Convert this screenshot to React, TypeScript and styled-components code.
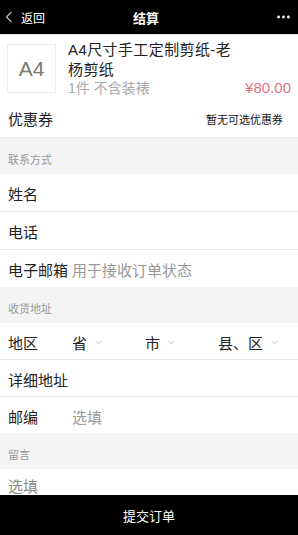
import React from 'react'
import styled, { createGlobalStyle } from 'styled-components'

const GlobalStyle = createGlobalStyle`
  html, body {
    margin: 0;
    padding: 0;
    background: #fff;
  }
  body {
    font-family: "Liberation Sans", "Noto Sans CJK SC", sans-serif;
    color: #222;
  }
`

const Page = styled.div`
  width: 298px;
  padding-bottom: 40px;
`

const Header = styled.header`
  display: flex;
  align-items: center;
  height: 34px;
  background: #000;
  color: #fff;
`

const BackLink = styled.div`
  display: flex;
  align-items: center;
  width: 50px;
  padding-left: 5px;
  box-sizing: border-box;
  font-size: 12px;
  gap: 8px;
`

const HeaderTitle = styled.div`
  flex: 1;
  text-align: center;
  font-size: 13px;
  font-weight: bold;
`

const MoreButton = styled.div`
  width: 56px;
  display: flex;
  justify-content: flex-end;
  padding-right: 8px;
  box-sizing: border-box;
`

const Product = styled.section`
  display: flex;
  height: 66px;
  padding: 5px 7px 0 7px;
  box-sizing: border-box;
  border-top: 1px solid #e2e2e2;
`

const Thumb = styled.div`
  width: 49px;
  height: 49px;
  margin-top: 4px;
  box-sizing: border-box;
  border: 1px solid #ececec;
  display: flex;
  align-items: center;
  justify-content: center;
  font-size: 21px;
  color: #7a7a6c;
  flex-shrink: 0;
`

const Info = styled.div`
  flex: 1;
  margin-left: 12px;
  display: flex;
  flex-direction: column;
`

const ProductName = styled.div`
  max-width: 168px;
  font-size: 15px;
  letter-spacing: 0.4px;
  line-height: 20px;
  color: #222;
`

const PriceLine = styled.div`
  display: flex;
  justify-content: space-between;
  align-items: center;
  line-height: 16px;
`

const Quantity = styled.span`
  font-size: 14px;
  color: #aaa;
`

const Price = styled.span`
  font-size: 15px;
  color: #e0727d;
`

const CouponRow = styled.div`
  display: flex;
  justify-content: space-between;
  align-items: center;
  height: 38px;
  box-sizing: border-box;
  padding: 0 15px 0 8px;
  border-bottom: 1px solid #e9e9e9;
`

const CouponTitle = styled.span`
  font-size: 15px;
  color: #1a1a1a;
`

const CouponHint = styled.span`
  font-size: 11px;
  color: #111;
`

const SectionLabel = styled.div`
  height: 36px;
  box-sizing: border-box;
  padding: 15px 0 0 8px;
  background: #f4f4f4;
  font-size: 11px;
  line-height: 14px;
  color: #9a9a9a;
`

const Row = styled.div<{ $last?: boolean; $h: number }>`
  display: flex;
  align-items: center;
  height: ${(p) => p.$h}px;
  padding: 2px 8px 0 8px;
  box-sizing: border-box;
  border-bottom: ${(p) => (p.$last ? 'none' : '1px solid #ebebeb')};
  font-size: 15px;
`

const Label = styled.span`
  width: 64px;
  flex-shrink: 0;
  color: #222;
`

const Placeholder = styled.span`
  color: #999;
`

const Region = styled.div`
  display: grid;
  grid-template-columns: 73px 73px 73px;
`

const RegionPick = styled.span`
  display: flex;
  align-items: center;
  gap: 8px;
  color: #222;
`

const Note = styled.div`
  min-height: 70px;
  padding: 10px 8px 0 8px;
  font-size: 15px;
  line-height: 16px;
  color: #888;
`

const SubmitBar = styled.div`
  position: fixed;
  left: 0;
  right: 0;
  bottom: 0;
  height: 40px;
  background: #000;
  color: #fff;
  display: flex;
  align-items: center;
  justify-content: center;
  font-size: 13px;
`

const Chevron = () => (
  <svg width="7" height="5" viewBox="0 0 7 5">
    <polyline points="0.5,0.8 3.5,3.8 6.5,0.8" fill="none" stroke="#bbb" strokeWidth="0.9" />
  </svg>
)

function App() {
  return (
    <Page>
      <GlobalStyle />
      <Header>
        <BackLink>
          <svg width="8" height="12" viewBox="0 0 8 12">
            <polyline points="6.5,0.8 1.5,6 6.5,11.2" fill="none" stroke="#ccc" strokeWidth="1.1" />
          </svg>
          返回
        </BackLink>
        <HeaderTitle>结算</HeaderTitle>
        <MoreButton>
          <svg width="13" height="4" viewBox="0 0 13 4">
            <circle cx="1.6" cy="2" r="1.4" fill="#fff" />
            <circle cx="6.5" cy="2" r="1.4" fill="#fff" />
            <circle cx="11.4" cy="2" r="1.4" fill="#fff" />
          </svg>
        </MoreButton>
      </Header>

      <Product>
        <Thumb>A4</Thumb>
        <Info>
          <ProductName>A4尺寸手工定制剪纸-老杨剪纸</ProductName>
          <PriceLine>
            <Quantity>1件 不含装裱</Quantity>
            <Price>¥80.00</Price>
          </PriceLine>
        </Info>
      </Product>

      <CouponRow>
        <CouponTitle>优惠券</CouponTitle>
        <CouponHint>暂无可选优惠券</CouponHint>
      </CouponRow>

      <SectionLabel>联系方式</SectionLabel>
      <Row $h={38}>
        <Label>姓名</Label>
      </Row>
      <Row $h={38}>
        <Label>电话</Label>
      </Row>
      <Row $h={37} $last>
        <Label>电子邮箱</Label>
        <Placeholder>用于接收订单状态</Placeholder>
      </Row>

      <SectionLabel>收货地址</SectionLabel>
      <Row $h={37}>
        <Label>地区</Label>
        <Region>
          <RegionPick>
            省<Chevron />
          </RegionPick>
          <RegionPick>
            市<Chevron />
          </RegionPick>
          <RegionPick>
            县、区<Chevron />
          </RegionPick>
        </Region>
      </Row>
      <Row $h={37}>
        <Label>详细地址</Label>
      </Row>
      <Row $h={36} $last>
        <Label>邮编</Label>
        <Placeholder>选填</Placeholder>
      </Row>

      <SectionLabel>留言</SectionLabel>
      <Note>选填</Note>

      <SubmitBar>提交订单</SubmitBar>
    </Page>
  )
}

export default App
